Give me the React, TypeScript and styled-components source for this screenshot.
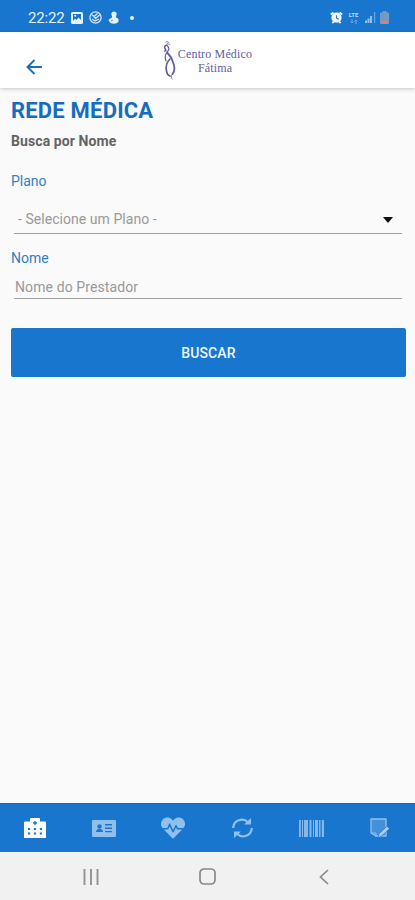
import React from 'react';
import styled, { createGlobalStyle } from 'styled-components';
import { FaHeartbeat } from 'react-icons/fa';

const BLUE = '#1976ce';

const GlobalStyle = createGlobalStyle`
  * { box-sizing: border-box; }
  body { margin: 0; background: #fafafa; font-family: Roboto, sans-serif; }
  svg { display: block; flex: none; }
`;

const Screen = styled.div`
  width: 415px;
  height: 900px;
  display: flex;
  flex-direction: column;
  background: #fafafa;
  overflow: hidden;
`;

const StatusBar = styled.div`
  flex: none;
  height: 32px;
  padding: 3px 26px 0 28px;
  background: ${BLUE};
  display: flex;
  align-items: center;
  justify-content: space-between;
`;

const StatusGroup = styled.div<{ $gap: number }>`
  display: flex;
  align-items: center;
  gap: ${(p) => p.$gap}px;
`;

const Clock = styled.span`
  color: #e4f1ff;
  font-size: 15px;
  line-height: 18px;
  letter-spacing: -0.15px;
`;

const Header = styled.header`
  flex: none;
  height: 56px;
  display: grid;
  grid-template-columns: 162px 1fr;
  background: #fff;
  box-shadow: 0 1px 4px rgba(0, 0, 0, 0.22);
`;

const BackButton = styled.button`
  border: 0;
  background: none;
  padding: 13px 0 0 26px;
  display: flex;
  align-items: center;
`;

const Brand = styled.div`
  display: flex;
  padding-top: 8px;
`;

const BrandName = styled.div`
  width: 76px;
  padding-top: 7px;
  text-align: center;
  white-space: nowrap;
  font-family: 'Liberation Serif', serif;
  font-size: 12px;
  line-height: 14px;
  letter-spacing: 0.15px;
  color: #625e9b;
`;

const Content = styled.main`
  flex: 1;
  display: flex;
  flex-direction: column;
  padding: 10px 9px 0 11px;
`;

const Title = styled.h1`
  margin: 0;
  font-size: 22px;
  line-height: 26px;
  font-weight: 700;
  letter-spacing: 0.2px;
  color: #166dc0;
`;

const Subtitle = styled.h2`
  margin: 8px 0 0;
  font-size: 14px;
  line-height: 18px;
  font-weight: 700;
  letter-spacing: 0.1px;
  color: #636363;
`;

const Label = styled.label<{ $top: number }>`
  margin-top: ${(p) => p.$top}px;
  font-size: 14px;
  line-height: 18px;
  color: #3080c4;
`;

const Field = styled.div<{ $height: number; $inset: number; $bottom: number }>`
  height: ${(p) => p.$height}px;
  margin: 0 4px 0 3px;
  padding: 0 9px ${(p) => p.$bottom}px ${(p) => p.$inset}px;
  border-bottom: 1px solid #a0a0a0;
  display: flex;
  align-items: flex-end;
  justify-content: space-between;
  font-size: 14px;
  line-height: 16px;
  color: #999;
`;

const FieldText = styled.span<{ $spacing: number }>`
  letter-spacing: ${(p) => p.$spacing}px;
`;

const SearchButton = styled.button`
  margin-top: 29px;
  height: 49px;
  border: 0;
  border-radius: 2px;
  background: ${BLUE};
  color: #eef7ff;
  font: 500 14px/16px Roboto, sans-serif;
  letter-spacing: 0.1px;
`;

const TabBar = styled.nav`
  flex: none;
  height: 49px;
  background: ${BLUE};
  border-top: 1px solid #1269bd;
  display: grid;
  grid-template-columns: repeat(6, 1fr);
  place-items: center;
`;

const Tab = styled.div<{ $active?: boolean }>`
  color: ${(p) => (p.$active ? '#fff' : '#90c0ee')};
`;

const SystemBar = styled.div`
  flex: none;
  height: 48px;
  padding: 1px 33px 0;
  background: #f1f1f1;
  display: grid;
  grid-template-columns: repeat(3, 1fr);
  place-items: center;
`;

const ImageIcon = () => (
  <svg width="12" height="12" viewBox="0 0 12 12">
    <rect width="12" height="12" rx="1.5" fill="#e8f4ff" />
    <path d="M2 2h8v6L7.5 5.5 5.5 8 4 6.8 2 9z" fill={BLUE} />
    <circle cx="4.2" cy="3.7" r="1" fill="#e8f4ff" />
  </svg>
);

const BallIcon = () => (
  <svg width="13" height="13" viewBox="0 0 13 13" fill="none" stroke="#cfe6fc" strokeWidth="1.3">
    <circle cx="6.5" cy="6.5" r="5.6" />
    <path d="M2.500 3.500l2.500 2 1.500 2 4-3.500M3 8l3 2 4-2M5 5.500l3.500-3" />
  </svg>
);

const BellFigureIcon = () => (
  <svg width="12" height="13" viewBox="0 0 12 13" fill="#e3f1ff">
    <circle cx="6" cy="3" r="2.600" />
    <path d="M4 3.500h4v3c2.200.5 3 2 2.600 3.500C10 12 8.500 12.700 6 12.700S2 12 1.600 10.800C.3 9.800.4 8.300 1.500 8L4 6.500z" />
    <path d="M3 10l2-1" stroke={BLUE} strokeWidth=".7" />
  </svg>
);

const Dot = styled.span`
  width: 4px;
  height: 4px;
  margin-left: 4px;
  border-radius: 50%;
  background: #e3f1ff;
`;

const AlarmIcon = () => (
  <svg width="13" height="13" viewBox="0 0 14 13">
    <path d="M.8 3.200l3-2.200M13.200 3.200L10.200 1M2.500 12.500l2-2M11.500 12.500l-2-2" stroke="#eff8ff" strokeWidth="2" />
    <circle cx="7" cy="6.700" r="5.500" fill="#eff8ff" />
    <path d="M7 4v3l2.300 1.300" fill="none" stroke={BLUE} strokeWidth="1.200" />
  </svg>
);

const LteMark = styled.div`
  width: 13px;
  display: flex;
  flex-direction: column;
  align-items: center;
  gap: 1px;
  color: #b9dafa;
  font-size: 6px;
  line-height: 7px;
  font-weight: 700;
`;

const LteArrows = () => (
  <svg width="8" height="5" viewBox="0 0 8 5" fill="none" stroke="#68a9e5">
    <path d="M2 0v4M.5 2.500L2 4l1.500-1.500M6 5V1M4.500 2.500L6 1l1.500 1.500" />
  </svg>
);

const SignalIcon = () => (
  <svg width="12" height="13" viewBox="0 0 12 13" fill="#8fc1ef">
    <path d="M1 9.500h2V12H1zM3.500 7.500h2V12h-2zM6 5h2v7H6z" />
    <path d="M10 1h1.200v11H10z" opacity=".65" />
  </svg>
);

const BatteryIcon = () => (
  <svg width="9" height="13" viewBox="0 0 9 13">
    <path d="M2.500 0h4v1.500H8q1 0 1 1V12q0 1-1 1H1q-1 0-1-1V2.500q0-1 1-1h1.500z" fill="#7899bd" />
    <rect x="1" y="10.500" width="7" height="2" fill="#df8468" />
  </svg>
);

const BackArrow = () => (
  <svg width="17" height="16" viewBox="0 0 17 16" fill="none" stroke="#1b71b9" strokeWidth="1.900">
    <path d="M8.500 1L1.500 8l7 7M1.500 8H16" />
  </svg>
);

const BrandFigure = () => (
  <svg width="15" height="41" viewBox="0 0 15 41" fill="none" stroke="#625ba3" strokeLinecap="round">
    <path d="M3.500 2Q5 .5 7 2.500M5 3.500l3 1" strokeWidth="1" opacity=".7" />
    <path d="M5 5Q1.500 6 3 8.500Q5 11 2.500 11" strokeWidth="1.500" />
    <path d="M5.500 6Q8.500 9 5 12Q2 17 4 21" strokeWidth="1.200" />
    <path d="M5.500 13Q9.500 17 11 22Q14 30 10.500 34" strokeWidth="1.800" />
    <path d="M8 19Q3 24 4.500 31Q5 35 8 36" strokeWidth="1.700" />
    <path d="M10.500 34Q8 35 10 39" strokeWidth="1" opacity=".75" />
  </svg>
);

const CaretSlot = styled.span`
  padding-bottom: 4px;
`;

const Caret = () => (
  <svg width="10" height="6" viewBox="0 0 10 6">
    <path d="M0 0h10L5.500 5.500h-1z" fill="#111" />
  </svg>
);

const HospitalIcon = () => (
  <svg width="22" height="20" viewBox="0 0 22 20">
    <path d="M0 4.500q0-1 1-1h5V1q0-1 1-1h8q1 0 1 1v2.500h5q1 0 1 1V20H0z" fill="currentColor" />
    <path d="M10.300 3h1.400v1.300H13v1.400h-1.300V7h-1.400V5.700H9V4.300h1.300zM4 10h2.200v2H4zM9.900 10h2.200v2H9.900zM15.800 10H18v2h-2.200zM4 14.500h2.200v2H4zM9.900 14.500h2.200v2H9.900zM15.800 14.500H18v2h-2.200z" fill={BLUE} />
  </svg>
);

const IdCardIcon = () => (
  <svg width="24" height="17" viewBox="0 0 24 17">
    <rect width="24" height="17" rx="1" fill="currentColor" />
    <circle cx="7.500" cy="6.500" r="2.200" fill={BLUE} />
    <path d="M4 12q0-3 3.500-3t3.500 3zM13 4h7v1.500h-7zM13 7.500h7V9h-7zM13 11h7v1.200h-7z" fill={BLUE} />
  </svg>
);

const SyncIcon = () => (
  <svg width="21" height="22" viewBox="0 0 21 22" fill="none" stroke="currentColor" strokeWidth="2.200">
    <path d="M1.200 11C1.500 3 11 .2 16 5.200M19.800 11C19.500 19 10 21.800 5 16.800" />
    <path d="M19 1v6.500h-7zM2 21v-6.500h7z" fill="currentColor" stroke="none" />
  </svg>
);

const BarcodeIcon = () => (
  <svg width="25" height="17" viewBox="0 0 25 17" fill="currentColor">
    <path d="M0 0h1.800v17H0zM3 0h1v17H3zM5 0h4v17H5zM10.500 0h2v17h-2zM14 0h1v17h-1zM16 0h3v17h-3zM20 0h1.500v17H20zM22.800 0H25v17h-2.200z" opacity=".9" />
  </svg>
);

const NoteIcon = () => (
  <svg width="20" height="21" viewBox="0 0 20 21" fill="none" stroke="currentColor">
    <path d="M1 1h15v17H6l-5-3z" fill="#4690d8" strokeWidth="1.300" />
    <path d="M1 15h5v4" strokeWidth="1" />
    <path d="M8 20l1.200-4.500 7.800-7.300 2.500 2.500-7.800 7.300z" fill="#a5cdf3" stroke={BLUE} strokeWidth=".7" />
  </svg>
);

const RecentsIcon = () => (
  <svg width="16" height="16" viewBox="0 0 16 16" stroke="#929292" strokeWidth="1.900">
    <path d="M1.500 0v16M8 0v16M14.500 0v16" />
  </svg>
);

const HomeIcon = () => (
  <svg width="17" height="17" viewBox="0 0 17 17">
    <rect x="1" y="1" width="15" height="15" rx="4" fill="none" stroke="#898989" strokeWidth="1.700" />
  </svg>
);

const SystemBackIcon = () => (
  <svg width="10" height="16" viewBox="0 0 10 16" fill="none" stroke="#898989" strokeWidth="1.700">
    <path d="M9 1L1.500 8 9 15" />
  </svg>
);

export default function App() {
  return (
    <Screen>
      <GlobalStyle />
      <StatusBar>
        <StatusGroup $gap={6}>
          <Clock>22:22</Clock>
          <ImageIcon />
          <BallIcon />
          <BellFigureIcon />
          <Dot />
        </StatusGroup>
        <StatusGroup $gap={4}>
          <AlarmIcon />
          <LteMark><span>LTE</span><LteArrows /></LteMark>
          <SignalIcon />
          <BatteryIcon />
        </StatusGroup>
      </StatusBar>
      <Header>
        <BackButton aria-label="Voltar"><BackArrow /></BackButton>
        <Brand>
          <BrandFigure />
          <BrandName>Centro Médico<br />Fátima</BrandName>
        </Brand>
      </Header>
      <Content>
        <Title>REDE MÉDICA</Title>
        <Subtitle>Busca por Nome</Subtitle>
        <Label $top={22}>Plano</Label>
        <Field $height={44} $inset={4} $bottom={6}>
          <FieldText $spacing={0.05}>- Selecione um Plano -</FieldText>
          <CaretSlot><Caret /></CaretSlot>
        </Field>
        <Label $top={15}>Nome</Label>
        <Field $height={32} $inset={1} $bottom={3}>
          <FieldText $spacing={0.1}>Nome do Prestador</FieldText>
        </Field>
        <SearchButton>BUSCAR</SearchButton>
      </Content>
      <TabBar>
        <Tab $active><HospitalIcon /></Tab>
        <Tab><IdCardIcon /></Tab>
        <Tab><FaHeartbeat size={24} /></Tab>
        <Tab><SyncIcon /></Tab>
        <Tab><BarcodeIcon /></Tab>
        <Tab><NoteIcon /></Tab>
      </TabBar>
      <SystemBar>
        <RecentsIcon />
        <HomeIcon />
        <SystemBackIcon />
      </SystemBar>
    </Screen>
  );
}
